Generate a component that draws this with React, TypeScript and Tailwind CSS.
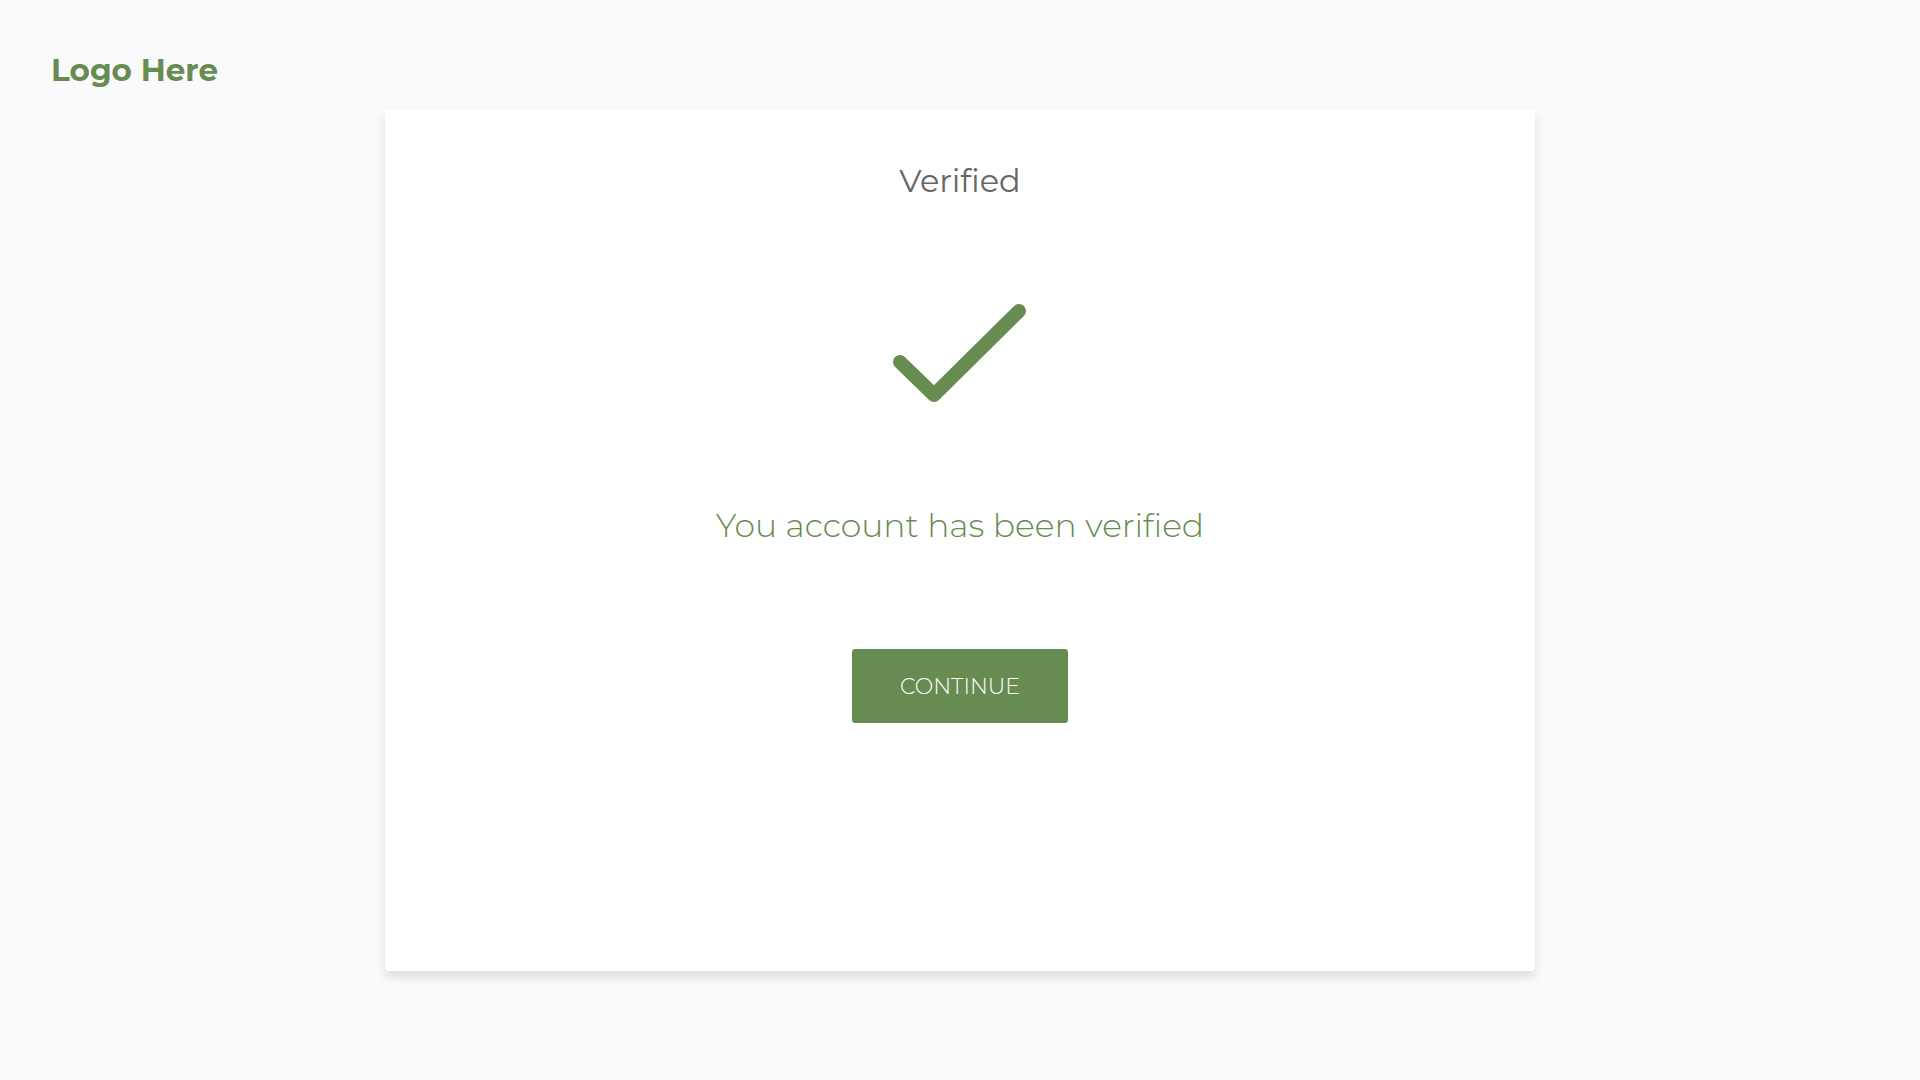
export default function App() {
  return (
    <div className="min-h-screen w-full bg-[#fafafa] font-['Montserrat','Lato',sans-serif]">
      <header className="h-[109px] pl-[51px] pt-[50px]">
        <h1 className="text-[31px] font-bold leading-[40px] text-[#678c52]">
          Logo Here
        </h1>
      </header>

      <main className="flex justify-center">
        <div className="flex h-[862px] w-[1150px] flex-col items-center rounded-[4px] bg-white pt-[52px] shadow-[0_6px_10px_rgba(0,0,0,0.12)]">
          <h2 className="text-[32px] leading-[40px] text-[#666666]">Verified</h2>

          <svg
            className="mt-[100px]"
            width="140"
            height="110"
            viewBox="0 0 140 110"
          >
            <path
              d="M24 68 L58 101 L143 17"
              transform="translate(-14 -7)"
              fill="none"
              stroke="#678c52"
              strokeWidth="14"
              strokeLinecap="round"
              strokeLinejoin="round"
            />
          </svg>

          <p className="mt-[94px] text-[33px] font-light leading-[40px] text-[#678c52]">
            You account has been verified
          </p>

          <button className="mt-[104px] h-[74px] w-[216px] rounded-[3px] bg-[#678c52] text-[22px] font-light text-white">
            CONTINUE
          </button>
        </div>
      </main>
    </div>
  );
}
